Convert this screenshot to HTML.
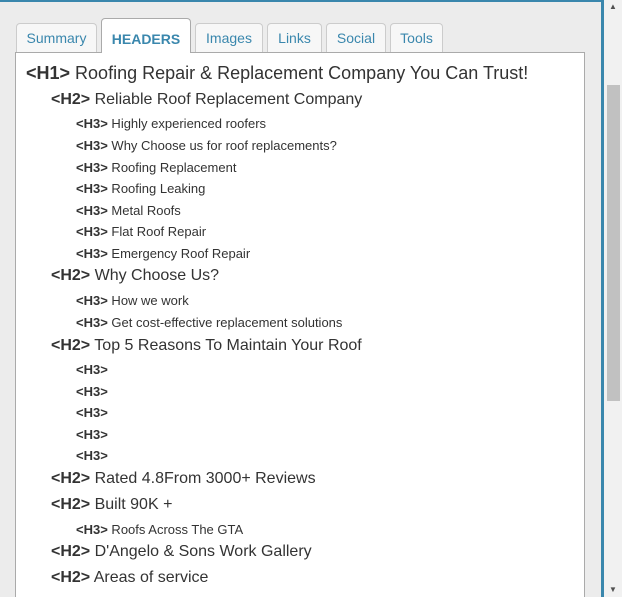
<!DOCTYPE html>
<html style="overflow:hidden;height:597px"><head><style>
body{margin:0;width:622px;height:597px;background:#ececec;position:relative;overflow:hidden;font-family:"Liberation Sans",sans-serif;color:#333}
.tb{position:absolute;top:0;left:0;width:603px;height:2px;background:#3a87ad}
.rb{position:absolute;top:0;left:601px;width:3px;height:597px;background:#3a87ad}
.sb{position:absolute;top:0;left:604px;width:18px;height:597px;background:#f1f1f1}
.th{position:absolute;left:607px;top:85px;width:13px;height:316px;background:#c1c1c1}
.tab{position:absolute;top:23px;height:29px;border:1px solid #ccc;border-bottom:none;border-radius:4px 4px 0 0;background:#f7f7f7;color:#3a87ad;font-size:14px;line-height:29px;text-align:center;box-sizing:border-box}
.act{top:18px;height:35px;background:#fff;font-weight:bold;line-height:40px;border-color:#aaa;z-index:2}
.panel{position:absolute;left:15px;top:52px;width:570px;height:545px;background:#fff;border:1px solid #aaa;border-bottom:none;box-sizing:border-box}
.l{position:absolute;white-space:nowrap;line-height:1}
.l b{font-weight:bold}
.h1{left:26px;font-size:18px}
.h2{left:51px;font-size:16px}
.h3{left:76px;font-size:13px}
.ar{position:absolute;left:609px;font-size:8px;color:#505050}
</style></head><body>
<div class="tb"></div><div class="rb"></div>
<div class="sb"></div><div class="th"></div>
<div class="ar" style="top:2px">▲</div><div class="ar" style="top:585px">▼</div>
<div class="panel"></div>
<div class="tab" style="left:16px;width:81px">Summary</div>
<div class="tab act" style="left:101px;width:90px">HEADERS</div>
<div class="tab" style="left:195px;width:68px">Images</div>
<div class="tab" style="left:267px;width:55px">Links</div>
<div class="tab" style="left:326px;width:60px">Social</div>
<div class="tab" style="left:390px;width:53px">Tools</div>
<div class="l h1" style="top:64px"><b>&lt;H1&gt;</b> Roofing Repair &amp; Replacement Company You Can Trust!</div>
<div class="l h2" style="top:92px"><b>&lt;H2&gt;</b> Reliable Roof Replacement Company</div>
<div class="l h3" style="top:117px"><b>&lt;H3&gt;</b> Highly experienced roofers</div>
<div class="l h3" style="top:139px"><b>&lt;H3&gt;</b> Why Choose us for roof replacements?</div>
<div class="l h3" style="top:161px"><b>&lt;H3&gt;</b> Roofing Replacement</div>
<div class="l h3" style="top:182px"><b>&lt;H3&gt;</b> Roofing Leaking</div>
<div class="l h3" style="top:204px"><b>&lt;H3&gt;</b> Metal Roofs</div>
<div class="l h3" style="top:225px"><b>&lt;H3&gt;</b> Flat Roof Repair</div>
<div class="l h3" style="top:247px"><b>&lt;H3&gt;</b> Emergency Roof Repair</div>
<div class="l h2" style="top:268px"><b>&lt;H2&gt;</b> Why Choose Us?</div>
<div class="l h3" style="top:294px"><b>&lt;H3&gt;</b> How we work</div>
<div class="l h3" style="top:316px"><b>&lt;H3&gt;</b> Get cost-effective replacement solutions</div>
<div class="l h2" style="top:338px"><b>&lt;H2&gt;</b> Top 5 Reasons To Maintain Your Roof</div>
<div class="l h3" style="top:363px"><b>&lt;H3&gt;</b></div>
<div class="l h3" style="top:385px"><b>&lt;H3&gt;</b></div>
<div class="l h3" style="top:406px"><b>&lt;H3&gt;</b></div>
<div class="l h3" style="top:428px"><b>&lt;H3&gt;</b></div>
<div class="l h3" style="top:449px"><b>&lt;H3&gt;</b></div>
<div class="l h2" style="top:471px"><b>&lt;H2&gt;</b> Rated 4.8From 3000+ Reviews</div>
<div class="l h2" style="top:497px"><b>&lt;H2&gt;</b> Built 90K +</div>
<div class="l h3" style="top:523px"><b>&lt;H3&gt;</b> Roofs Across The GTA</div>
<div class="l h2" style="top:544px"><b>&lt;H2&gt;</b> D'Angelo &amp; Sons Work Gallery</div>
<div class="l h2" style="top:570px"><b>&lt;H2&gt;</b> Areas of service</div>
</body></html>
